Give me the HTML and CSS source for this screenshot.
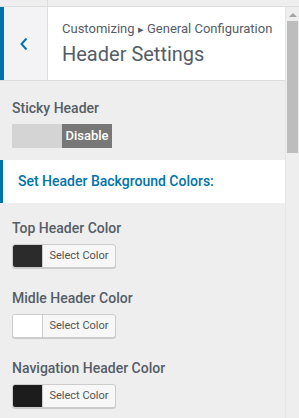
FILE: index.html
```html
<!DOCTYPE html>
<html lang="en">
<head>
  <meta charset="UTF-8">
  <meta name="viewport" content="width=device-width, initial-scale=1.0">
  <title>Header Settings</title>
  <link rel="stylesheet" href="styles.css">
</head>
<body>
  <div class="topbar">
    <div class="topbar-left"></div>
  </div>

  <div class="frame">
    <div class="panel">
      <div class="section-head">
        <button class="back-btn">
          <svg width="10" height="14" viewBox="0 0 10 14"><path d="M7.5 1.5 L2.5 7 L7.5 12.5" fill="none" stroke="#0073aa" stroke-width="2"/></svg>
        </button>
        <div class="title">
          <div class="crumb">Customizing <span class="arrow">&#9656;</span> General Configuration</div>
          <h1>Header Settings</h1>
        </div>
      </div>

      <div class="control sticky-control">
        <div class="label">Sticky Header</div>
        <div class="toggle">
          <span class="toggle-off"></span>
          <span class="toggle-on">Disable</span>
        </div>
      </div>

      <div class="group-title">Set Header Background Colors:</div>

      <div class="control color-control">
        <div class="label">Top Header Color</div>
        <button class="color-btn"><span class="swatch" style="background:#2b2b2b"></span><span class="color-text">Select Color</span></button>
      </div>

      <div class="control color-control">
        <div class="label">Midle Header Color</div>
        <button class="color-btn"><span class="swatch" style="background:#ffffff"></span><span class="color-text">Select Color</span></button>
      </div>

      <div class="control color-control">
        <div class="label">Navigation Header Color</div>
        <button class="color-btn"><span class="swatch" style="background:#1c1c1c"></span><span class="color-text">Select Color</span></button>
      </div>
    </div>

    <div class="scrollbar">
      <div class="scroll-up"></div>
      <div class="scroll-thumb"></div>
    </div>
  </div>
</body>
</html>
```

FILE: styles.css
```css
* {
  margin: 0;
  padding: 0;
  box-sizing: border-box;
}

body {
  font-family: Roboto, 'Liberation Sans', sans-serif;
  background: #eeeeee;
  color: #555d66;
  width: 299px;
  height: 418px;
  overflow: hidden;
}

.topbar {
  height: 7px;
  background: #eeeeee;
  border-bottom: 1px solid #dddddd;
}

.topbar-left {
  width: 48px;
  height: 6px;
  border-right: 1px solid #dddddd;
}

.frame {
  display: flex;
}

.panel {
  flex: 1;
}

.section-head {
  display: flex;
  height: 74px;
  background: #ffffff;
  border-bottom: 1px solid #dddddd;
}

.back-btn {
  width: 48px;
  background: #f3f3f5;
  border: none;
  border-left: 4px solid #0073aa;
  border-right: 1px solid #dddddd;
  display: flex;
  align-items: center;
  justify-content: center;
  padding-right: 4px;
}

.title {
  padding: 13px 0 0 14px;
}

.crumb {
  font-size: 13px;
  line-height: 17px;
  color: #555d66;
  white-space: nowrap;
}

.crumb .arrow {
  font-size: 11px;
}

.title h1 {
  font-size: 20px;
  font-weight: 400;
  line-height: 24px;
  margin-top: 4px;
  color: #555d66;
}

.label {
  font-size: 14px;
  font-weight: 500;
  line-height: 18px;
  color: #555d66;
}

.control {
  padding: 0 12px;
}

.sticky-control {
  padding-top: 18px;
}

.toggle {
  display: flex;
  width: 100px;
  height: 24px;
  margin-top: 7px;
}

.toggle-off {
  width: 50px;
  background: #d4d4d4;
}

.toggle-on {
  width: 50px;
  background: #777777;
  color: #ffffff;
  font-size: 13px;
  font-weight: 500;
  line-height: 24px;
  text-align: center;
}

.group-title {
  margin-top: 12px;
  height: 43px;
  background: #ffffff;
  border-left: 3px solid #0073aa;
  padding-left: 15px;
  font-size: 14px;
  font-weight: 500;
  line-height: 43px;
  color: #0073aa;
}

.color-control {
  padding-top: 21px;
}

.group-title + .color-control {
  padding-top: 16px;
}

.color-btn {
  display: flex;
  margin-top: 7px;
  width: 104px;
  height: 24px;
  border: 1px solid #cccccc;
  border-radius: 3px;
  background: #f7f7f7;
  box-shadow: 0 1px 0 #cccccc;
  overflow: hidden;
  font-family: inherit;
}

.swatch {
  width: 30px;
  height: 100%;
  border-right: 1px solid #cccccc;
}

.color-text {
  flex: 1;
  font-size: 11px;
  line-height: 22px;
  color: #555555;
  text-align: center;
}

.scrollbar {
  width: 14px;
  height: 411px;
  background: #eeeeee;
  border-left: 1px solid #e6e6e6;
  padding-top: 6px;
}

.scroll-up {
  width: 0;
  height: 0;
  margin: 0 auto;
  border-left: 4px solid transparent;
  border-right: 4px solid transparent;
  border-bottom: 4px solid #a3a3a3;
}

.scroll-thumb {
  width: 11px;
  height: 132px;
  margin: 4px auto 0;
  background: #bdbdbd;
}
```
